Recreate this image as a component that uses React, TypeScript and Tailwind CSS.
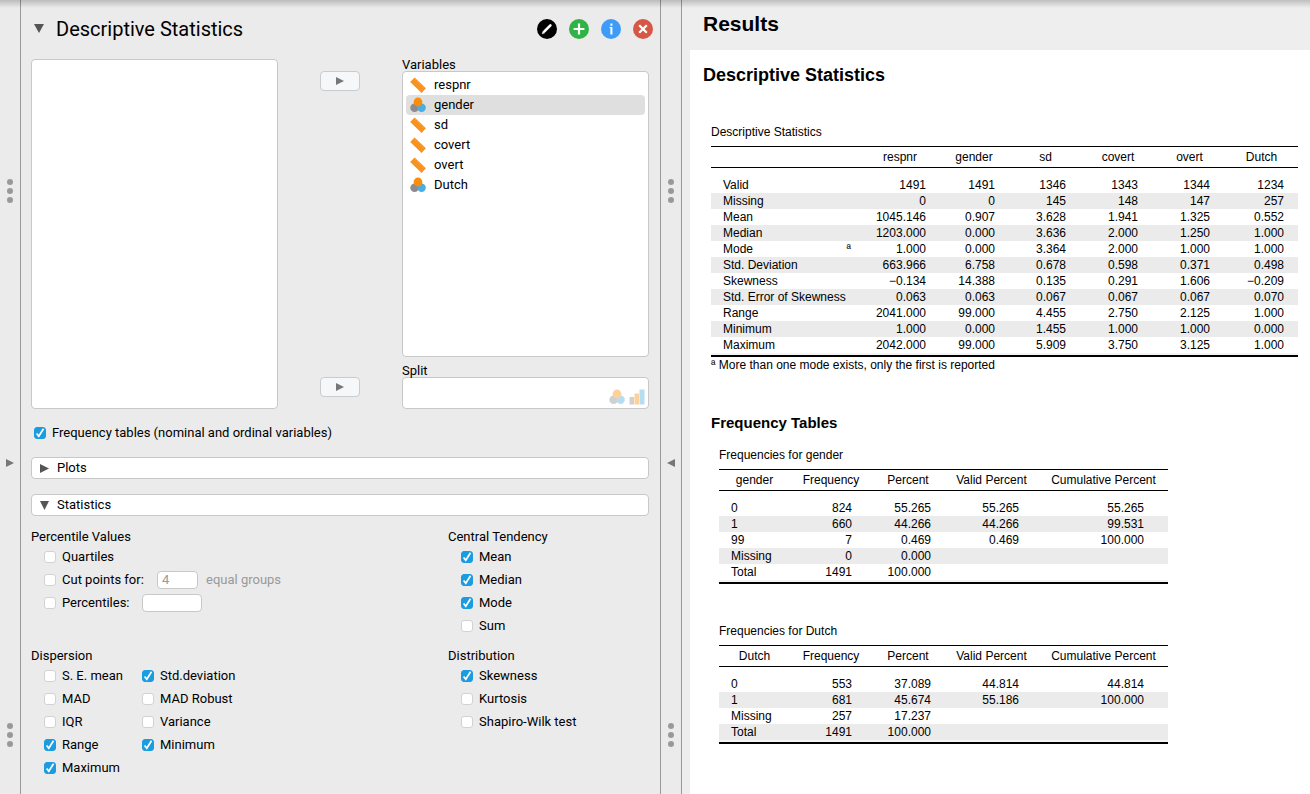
import { useState } from "react"
import type { ReactNode } from "react"

type VariableType = "scale" | "nominal"

const variables: { name: string; type: VariableType }[] = [
  { name: "respnr", type: "scale" },
  { name: "gender", type: "nominal" },
  { name: "sd", type: "scale" },
  { name: "covert", type: "scale" },
  { name: "overt", type: "scale" },
  { name: "Dutch", type: "nominal" },
]

type Column = { label: string; width: string; pad: string }

const descriptiveColumns: Column[] = [
  { label: "respnr", width: "w-[78px]", pad: "pr-[13px]" },
  { label: "gender", width: "w-[70px]", pad: "pr-[14px]" },
  { label: "sd", width: "w-[73px]", pad: "pr-4" },
  { label: "covert", width: "w-[72px]", pad: "pr-4" },
  { label: "overt", width: "w-[71px]", pad: "pr-[15px]" },
  { label: "Dutch", width: "w-[73px]", pad: "pr-[14px]" },
]

const descriptiveRows = [
  ["Valid", "1491", "1491", "1346", "1343", "1344", "1234"],
  ["Missing", "0", "0", "145", "148", "147", "257"],
  ["Mean", "1045.146", "0.907", "3.628", "1.941", "1.325", "0.552"],
  ["Median", "1203.000", "0.000", "3.636", "2.000", "1.250", "1.000"],
  ["Mode", "1.000", "0.000", "3.364", "2.000", "1.000", "1.000"],
  ["Std. Deviation", "663.966", "6.758", "0.678", "0.598", "0.371", "0.498"],
  ["Skewness", "−0.134", "14.388", "0.135", "0.291", "1.606", "−0.209"],
  ["Std. Error of Skewness", "0.063", "0.063", "0.067", "0.067", "0.067", "0.070"],
  ["Range", "2041.000", "99.000", "4.455", "2.750", "2.125", "1.000"],
  ["Minimum", "1.000", "0.000", "1.455", "1.000", "1.000", "0.000"],
  ["Maximum", "2042.000", "99.000", "5.909", "3.750", "3.125", "1.000"],
]

const frequencyColumns: Column[] = [
  { label: "Frequency", width: "w-[82px]", pad: "pr-5" },
  { label: "Percent", width: "w-[72px]", pad: "pr-[13px]" },
  { label: "Valid Percent", width: "w-[95px]", pad: "pr-5" },
  { label: "Cumulative Percent", width: "w-[129px]", pad: "pr-6" },
]

const genderRows = [
  ["0", "824", "55.265", "55.265", "55.265"],
  ["1", "660", "44.266", "44.266", "99.531"],
  ["99", "7", "0.469", "0.469", "100.000"],
  ["Missing", "0", "0.000", "", ""],
  ["Total", "1491", "100.000", "", ""],
]

const dutchRows = [
  ["0", "553", "37.089", "44.814", "44.814"],
  ["1", "681", "45.674", "55.186", "100.000"],
  ["Missing", "257", "17.237", "", ""],
  ["Total", "1491", "100.000", "", ""],
]

function Triangle({ direction, className = "" }: { direction: "right" | "left" | "down"; className?: string }) {
  const points = { right: "0,0 8,4 0,8", left: "8,0 0,4 8,8", down: "0,0 8,0 4,8" }[direction]
  return (
    <svg viewBox="0 0 8 8" preserveAspectRatio="none" className={`shrink-0 ${className}`} aria-hidden="true">
      <polygon points={points} fill="currentColor" />
    </svg>
  )
}

function NominalIcon() {
  return (
    <svg viewBox="0 0 16 16" className="w-4 h-4 shrink-0" aria-hidden="true">
      <circle cx="4.6" cy="10.8" r="4.3" fill="#8c8c8c" />
      <circle cx="11.6" cy="10.8" r="4.2" fill="#4aaee3" />
      <circle cx="8" cy="5" r="4.4" fill="#fb8d0b" />
    </svg>
  )
}

function ScaleIcon() {
  return (
    <svg viewBox="0 0 16 16" className="w-4 h-4 shrink-0" aria-hidden="true">
      <path d="M4.6.4 15.9 11.2 11.6 15.9.2 5Z" fill="#f8921d" />
      <path d="m6 2.4-1.3 1.3M8 4.2l-.9.9M9.8 6 8.4 7.4M11.7 7.8l-.9.9M13.6 9.6l-1.4 1.4" stroke="#fbb56a" strokeWidth="0.6" />
    </svg>
  )
}

function OrdinalIcon() {
  return (
    <svg viewBox="0 0 16 16" className="w-4 h-4 shrink-0" aria-hidden="true">
      <rect x="0.5" y="8" width="4.5" height="7.5" fill="#8c8c8c" />
      <rect x="5.5" y="4.5" width="4.5" height="11" fill="#fb8d0b" />
      <rect x="10.5" y="0.5" width="5" height="15" fill="#4aaee3" />
    </svg>
  )
}

function IconButton({ label, color, children }: { label: string; color: string; children: ReactNode }) {
  return (
    <button type="button" aria-label={label} className={`w-5 h-5 rounded-full ${color}`}>
      <svg viewBox="0 0 20 20" className="w-5 h-5" fill="none" stroke="#fff" aria-hidden="true">
        {children}
      </svg>
    </button>
  )
}

function Check({ label, checked = false, className = "" }: { label: string; checked?: boolean; className?: string }) {
  const [on, setOn] = useState(checked)
  return (
    <label className={`flex items-center gap-[6px] whitespace-nowrap ${className}`}>
      <span className="relative w-3 h-3 shrink-0">
        <input
          type="checkbox"
          checked={on}
          onChange={(e) => setOn(e.target.checked)}
          className="block w-3 h-3 appearance-none rounded-[3px] border border-[#d2d2d2] bg-white checked:border-[#1b9ce0] checked:bg-[#1b9ce0]"
        />
        {on && (
          <svg viewBox="0 0 12 12" className="absolute inset-0 w-3 h-3 pointer-events-none" aria-hidden="true">
            <path d="M2.6 6.4 4.8 9.3 9.5 1.8" fill="none" stroke="#fff" strokeWidth="1.7" />
          </svg>
        )}
      </span>
      {label}
    </label>
  )
}

function CheckGroup({ title, children }: { title: string; children: ReactNode }) {
  return (
    <fieldset>
      <legend className="h-[18px] leading-5">{title}</legend>
      <div className="pl-[13px]">{children}</div>
    </fieldset>
  )
}

function SplitBar({ direction, className }: { direction: "left" | "right"; className: string }) {
  const dots = (
    <div className="flex flex-col gap-[3px]">
      <span className="w-[6px] h-[6px] rounded-full bg-[#999]" />
      <span className="w-[6px] h-[6px] rounded-full bg-[#999]" />
      <span className="w-[6px] h-[6px] rounded-full bg-[#999]" />
    </div>
  )
  return (
    <div className={`flex shrink-0 flex-col items-center gap-64 border-r border-[#999] pt-[179px] ${className}`}>
      {dots}
      <button type="button" aria-label="Toggle panel" className="text-[#777]">
        <Triangle direction={direction} className="w-2 h-2" />
      </button>
      {dots}
    </div>
  )
}

function ResultTable({
  caption,
  stub = "",
  stubWidth,
  columns,
  rows,
  marked,
}: {
  caption: string
  stub?: string
  stubWidth: string
  columns: Column[]
  rows: string[][]
  marked?: string
}) {
  return (
    <table className="table-fixed border-separate border-spacing-0 text-xs leading-4">
      <caption className="pb-[6px] text-left">{caption}</caption>
      <thead>
        <tr>
          <th scope="col" className={`h-[22px] border-y border-black font-normal ${stubWidth}`}>
            {stub}
          </th>
          {columns.map((col) => (
            <th key={col.label} scope="col" className={`h-[22px] border-y border-black font-normal whitespace-nowrap ${col.width}`}>
              {col.label}
            </th>
          ))}
        </tr>
      </thead>
      <tbody>
        <tr>
          <td colSpan={columns.length + 1} className="h-[9px]" />
        </tr>
        {rows.map(([name, ...values], i) => (
          <tr key={name} className={i % 2 === 1 ? "bg-[#ebebeb]" : ""}>
            <th scope="row" className="h-4 pl-3 text-left font-normal whitespace-nowrap">
              {name === marked ? (
                <span className="flex justify-between pr-[10px]">
                  {name}
                  <span>ª</span>
                </span>
              ) : (
                name
              )}
            </th>
            {values.map((value, j) => (
              <td key={columns[j].label} className={`text-right ${columns[j].pad}`}>
                {value}
              </td>
            ))}
          </tr>
        ))}
        <tr>
          <td colSpan={columns.length + 1} className="h-1 border-b-2 border-black bg-[#f4f4f4]" />
        </tr>
      </tbody>
    </table>
  )
}

function OptionsPanel() {
  const box = "rounded-[4px] border border-[#c8c8c8] bg-white"
  const arrow = "flex h-5 w-10 items-center justify-center rounded-[4px] border border-[#c8ccd0] bg-[#f6f7f9] text-[#777]"

  return (
    <section className="w-[640px] shrink-0 border-r border-[#999] pl-[10px] pr-[11px] pb-3 font-['Roboto',sans-serif] text-[13px]">
      <header className="-mr-1 mb-[2px] flex h-[57px] items-center justify-between">
        <h1 className="flex items-center gap-3 pl-[3px] text-xl">
          <Triangle direction="down" className="w-[10px] h-[9px] text-[#555]" />
          Descriptive Statistics
        </h1>
        <div className="flex gap-3">
          <IconButton label="Edit title" color="bg-black">
            <path d="m7.4 12.4 6-6" strokeWidth="2.6" strokeLinecap="round" />
            <path d="m5 15 .9-2.8 1.9 1.9Z" fill="#fff" strokeWidth="0.3" />
          </IconButton>
          <IconButton label="Duplicate" color="bg-[#2fb344]">
            <path d="M10 4.6v10.8M4.6 10h10.8" strokeWidth="2.2" />
          </IconButton>
          <IconButton label="Help" color="bg-[#3f9bf8]">
            <path d="M10.4 8v7.4M10.4 4.6v2.2" strokeWidth="2" />
            <path d="M8.6 8.5h1.8" strokeWidth="1" />
          </IconButton>
          <IconButton label="Remove" color="bg-[#d75746]">
            <path d="m6.2 6.2 7.6 7.6M13.8 6.2l-7.6 7.6" strokeWidth="2.2" />
          </IconButton>
        </div>
      </header>

      <div className="grid grid-cols-[247px_1fr_247px]">
        <ul aria-label="Available variables" className={box} />
        <div className="flex flex-col items-center justify-between py-3">
          <button type="button" aria-label="Move to Variables" className={arrow}>
            <Triangle direction="right" className="w-2 h-2" />
          </button>
          <button type="button" aria-label="Move to Split" className={arrow}>
            <Triangle direction="right" className="w-2 h-2" />
          </button>
        </div>
        <div>
          <h2 id="variables" className="h-3 leading-3">Variables</h2>
          <ul aria-labelledby="variables" className={`h-[286px] p-[3px] ${box}`}>
            {variables.map((v) => (
              <li
                key={v.name}
                className={`flex h-5 items-center gap-2 rounded-[4px] px-1 ${v.name === "gender" ? "bg-[#dfdfdf]" : ""}`}
              >
                {v.type === "scale" ? <ScaleIcon /> : <NominalIcon />}
                {v.name}
              </li>
            ))}
          </ul>
          <h2 id="split" className="mt-2 h-3 leading-3">Split</h2>
          <div aria-labelledby="split" className={`flex h-8 items-end justify-end px-[3px] pb-[3px] ${box}`}>
            <span className="flex gap-1 opacity-40">
              <NominalIcon />
              <OrdinalIcon />
            </span>
          </div>
        </div>
      </div>

      <Check label="Frequency tables (nominal and ordinal variables)" checked className="my-3 h-6 pl-[3px]" />

      <button type="button" className={`flex h-[22px] w-full items-center gap-2 pl-2 ${box}`}>
        <Triangle direction="right" className="w-[9px] h-[9px] text-[#555]" />
        Plots
      </button>
      <button type="button" className={`mt-[15px] flex h-[22px] w-full items-center gap-2 pl-2 ${box}`}>
        <Triangle direction="down" className="w-[9px] h-[9px] text-[#555]" />
        Statistics
      </button>

      <div className="mt-[11px] grid grid-cols-[417px_1fr] gap-y-[9px]">
        <CheckGroup title="Percentile Values">
          <Check label="Quartiles" className="h-[23px]" />
          <div className="flex h-[23px] items-center">
            <Check label="Cut points for:" className="w-[113px]" />
            <input
              type="text"
              aria-label="Number of equal groups"
              defaultValue="4"
              disabled
              className={`h-[18px] w-[41px] px-1 text-[#999] ${box}`}
            />
            <span className="ml-2 text-[#999]">equal groups</span>
          </div>
          <div className="flex h-[23px] items-center">
            <Check label="Percentiles:" className="w-[98px]" />
            <input type="text" aria-label="Percentiles" className={`h-[18px] w-[60px] px-1 ${box}`} />
          </div>
        </CheckGroup>
        <CheckGroup title="Central Tendency">
          <Check label="Mean" checked className="h-[23px]" />
          <Check label="Median" checked className="h-[23px]" />
          <Check label="Mode" checked className="h-[23px]" />
          <Check label="Sum" className="h-[23px]" />
        </CheckGroup>
        <CheckGroup title="Dispersion">
          <div className="grid grid-cols-[98px_1fr]">
            <Check label="S. E. mean" className="h-[23px]" />
            <Check label="Std.deviation" checked className="h-[23px]" />
            <Check label="MAD" className="h-[23px]" />
            <Check label="MAD Robust" className="h-[23px]" />
            <Check label="IQR" className="h-[23px]" />
            <Check label="Variance" className="h-[23px]" />
            <Check label="Range" checked className="h-[23px]" />
            <Check label="Minimum" checked className="h-[23px]" />
            <Check label="Maximum" checked className="h-[23px]" />
          </div>
        </CheckGroup>
        <CheckGroup title="Distribution">
          <Check label="Skewness" checked className="h-[23px]" />
          <Check label="Kurtosis" className="h-[23px]" />
          <Check label="Shapiro-Wilk test" className="h-[23px]" />
        </CheckGroup>
      </div>
    </section>
  )
}

function ResultsPanel() {
  return (
    <main className="flex min-w-0 flex-1 flex-col bg-[#eee] pl-2 font-['Liberation_Sans',Arial,sans-serif]">
      <h1 className="h-[50px] pl-[13px] text-[21px] leading-[48px] font-bold">Results</h1>
      <div className="flex-1 bg-white pt-[13px] pl-[13px]">
        <h2 className="text-lg leading-6 font-bold">Descriptive Statistics</h2>
        <div className="mt-[37px] pl-2">
          <ResultTable
            caption="Descriptive Statistics"
            stubWidth="w-[150px]"
            columns={descriptiveColumns}
            rows={descriptiveRows}
            marked="Mode"
          />
          <p className="text-xs leading-4">ª More than one mode exists, only the first is reported</p>

          <h3 className="mt-10 text-[15px] leading-5 font-bold">Frequency Tables</h3>
          <div className="mt-[14px] flex flex-col items-start gap-[39px] pl-2">
            <ResultTable
              caption="Frequencies for gender"
              stub="gender"
              stubWidth="w-[71px]"
              columns={frequencyColumns}
              rows={genderRows}
            />
            <ResultTable
              caption="Frequencies for Dutch"
              stub="Dutch"
              stubWidth="w-[71px]"
              columns={frequencyColumns}
              rows={dutchRows}
            />
          </div>
        </div>
      </div>
    </main>
  )
}

export default function App() {
  return (
    <div className="relative flex min-h-screen bg-[#ebebeb] text-black">
      <SplitBar direction="right" className="w-[21px]" />
      <OptionsPanel />
      <SplitBar direction="left" className="w-[21px]" />
      <ResultsPanel />
      <div className="pointer-events-none absolute inset-x-0 top-0 h-2 bg-linear-to-b from-black/20 to-transparent" />
    </div>
  )
}
